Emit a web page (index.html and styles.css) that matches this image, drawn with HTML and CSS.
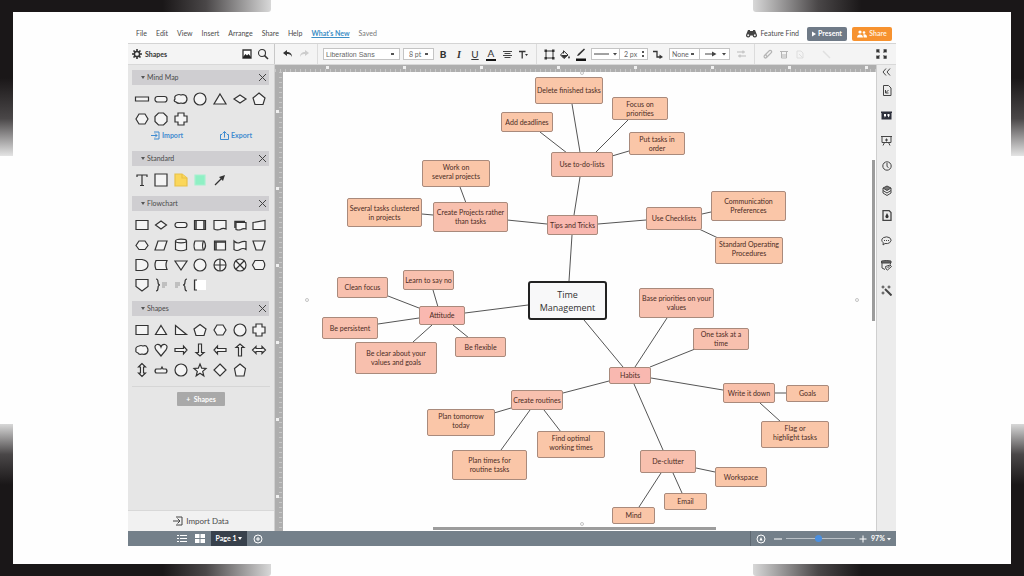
FILE: index.html
```html
<!DOCTYPE html>
<html lang="en">
<head>
<meta charset="utf-8">
<title>Time Management</title>
<link rel="stylesheet" href="styles.css">
</head>
<body>
<div class="edge edge-h edge-top edge-left"></div>
<div class="edge edge-v edge-top edge-left"></div>
<div class="edge edge-h edge-top edge-right"></div>
<div class="edge edge-v edge-top edge-right"></div>
<div class="edge edge-h edge-bottom edge-left"></div>
<div class="edge edge-v edge-bottom edge-left"></div>
<div class="edge edge-h edge-bottom edge-right"></div>
<div class="edge edge-v edge-bottom edge-right"></div>

<div class="app">
  <header class="menubar">
    <nav class="menus">
      <button>File</button><button>Edit</button><button>View</button><button>Insert</button><button>Arrange</button><button>Share</button><button>Help</button>
      <a href="#new">What's New</a>
      <span class="saved">Saved</span>
    </nav>
    <div class="actions">
      <button class="find"><svg width="11" height="9" viewBox="0 0 11 9"><path d="M2 1h2v1h3V1h2l2 5a2.2 2.2 0 1 1-4.400 0.500H4.400A2.200 2.200 0 1 1 0 6z" fill="#444"/><circle cx="2.200" cy="6.300" r="1" fill="#eee"/><circle cx="8.800" cy="6.300" r="1" fill="#eee"/></svg>Feature Find</button>
      <button class="pill present"><svg width="4" height="6" viewBox="0 0 4 6"><path d="M0 0.500L4 3 0 5.500z" fill="#fff"/></svg>Present</button>
      <button class="pill share"><svg width="10" height="8" viewBox="0 0 10 8" fill="#fff"><circle cx="3" cy="2" r="1.600"/><path d="M0 7.500c0-4 6-4 6 0z"/><circle cx="7" cy="2.500" r="1.300"/><path d="M6.600 7.500H10c0-3-2-3.500-3.600-3"/></svg>Share</button>
    </div>
  </header>

  <div class="toolbar">
    <div class="shapes-head">
      <svg width="10" height="10" viewBox="0 0 10 10" fill="none" stroke="#333"><circle cx="5" cy="5" r="2.600" stroke-width="1.500"/><path d="M5 0v2M5 8v2M0 5h2M8 5h2M1.500 1.500l1.400 1.400M7.100 7.100l1.400 1.400M8.500 1.500L7.100 2.900M2.900 7.100L1.500 8.500" stroke-width="1.600"/></svg>
      <strong>Shapes</strong>
      <button class="icon push" aria-label="Images"><svg width="10" height="10" viewBox="0 0 10 10"><path d="M1 1h8v8H1z" fill="#fff" stroke="#333" stroke-width="1.300"/><path d="M1 8l2.500-3L5 6.500 6.500 5 9 8v1H1z" fill="#222"/></svg></button>
      <button class="icon" aria-label="Search"><svg width="12" height="12" viewBox="0 0 12 12" fill="none" stroke="#333"><circle cx="5" cy="5" r="3.500" stroke-width="1.100"/><path d="M7.600 7.600L11 11" stroke-width="1.500"/></svg></button>
    </div>
    <div class="tools">
      <button class="icon" aria-label="Undo"><svg width="10" height="8" viewBox="0 0 10 8"><path d="M4 0L0 3l4 3V4c2.500-.2 4 .5 5 3 0-3.500-2-5-5-5z" fill="#333"/></svg></button>
      <button class="icon" aria-label="Redo"><svg width="10" height="8" viewBox="0 0 10 8"><path d="M6 0l4 3-4 3V4c-2.500-.2-4 .5-5 3 0-3.500 2-5 5-5z" fill="#ccc"/></svg></button>
      <span class="rule"></span>
      <select class="box font" aria-label="Font"><option>Liberation Sans</option></select>
      <select class="box size" aria-label="Font size"><option>8 pt</option></select>
      <button class="icon letter bold">B</button>
      <button class="icon letter italic">I</button>
      <button class="icon letter under">U</button>
      <button class="icon letter colour">A</button>
      <button class="icon" aria-label="Align"><svg width="9" height="9" viewBox="0 0 9 9" stroke="#444" stroke-width="1"><path d="M0 1.500h9M1.500 3.500h6M0 5.500h9M1.500 7.500h6"/></svg></button>
      <button class="icon" aria-label="Text options"><svg width="9" height="9" viewBox="0 0 9 9"><path d="M0 1.500h6.500M3.200 1.500V8.500" stroke="#333" stroke-width="1.300"/><path d="M6 4h3L7.500 6z" fill="#333"/></svg></button>
      <span class="rule"></span>
      <button class="icon" aria-label="Shape style"><svg width="11" height="11" viewBox="0 0 11 11"><path d="M2 2h7v7H2z" fill="none" stroke="#333"/><path d="M0.500 0.500h2.500v2.500H0.500zM8 0.500h2.500v2.500H8zM0.500 8h2.500v2.500H0.500zM8 8h2.500v2.500H8z" fill="#333"/></svg></button>
      <button class="icon" aria-label="Fill"><svg width="10" height="9" viewBox="0 0 10 9"><path d="M3.500 0.500v3" stroke="#333"/><path d="M4 1.200L8 5 4 8.500 0.500 5z" fill="none" stroke="#333"/><path d="M1 5h7L4 8.500zM9 5.500l.9 2a.9.9 0 1 1-1.800 0z" fill="#333"/></svg></button>
      <button class="icon" aria-label="Line colour"><svg width="10" height="13" viewBox="0 0 10 13"><path d="M1 8L2 6 8 0.500 9 1.500 3 7.500z" fill="#333"/><path d="M0 10.500h10v2.500H0z" fill="#111"/></svg></button>
      <div class="joined first">
        <button class="box line" aria-label="Line style"><svg width="25" height="8" viewBox="0 0 25 8"><path d="M1 4h15" stroke="#444"/><path d="M20 3h4L22 5.500z" fill="#444"/></svg></button>
        <input class="box width" type="text" value="2 px" aria-label="Line width">
      </div>
      <button class="icon" aria-label="Connector"><svg width="10" height="9" viewBox="0 0 10 9"><path d="M0 1.500h4v5.500h3" fill="none" stroke="#333" stroke-width="1.300"/><path d="M6.500 4.500L10 7 6.500 9z" fill="#333"/></svg></button>
      <div class="joined">
        <select class="box none" aria-label="Line start"><option>None</option></select>
        <button class="box arrow" aria-label="Line end"><svg width="26" height="8" viewBox="0 0 26 8" fill="#444"><path d="M3 3.500h7V1.500L14.500 4 10 6.500v-2H3zM20 3h4L22 5.500z"/></svg></button>
      </div>
      <button class="icon" aria-label="Swap ends"><svg width="9" height="8" viewBox="0 0 9 8" fill="none" stroke="#bbb"><path d="M0 2h8M6 0.500v3M1 6h8M3 4.500v3"/></svg></button>
      <span class="rule"></span>
      <button class="icon" aria-label="Link"><svg width="10" height="10" viewBox="0 0 10 10" fill="none" stroke="#b5b5b5" stroke-width="1.200"><path d="M3 5l3.500-3.500a1.500 1.500 0 0 1 2 2L5 7a1 1 0 0 1-1.500-1.500M6 6L3.500 8.500a1.300 1.300 0 0 1-2-2L3 5"/></svg></button>
      <button class="icon" aria-label="Lock"><svg width="8" height="9" viewBox="0 0 8 9" fill="none" stroke="#b5b5b5"><path d="M0 1.500h8M1.500 2v6h5V2M3 4v3M5 4v3"/></svg></button>
      <button class="icon" aria-label="Copy style"><svg width="8" height="9" viewBox="0 0 8 9" fill="none" stroke="#dedede"><path d="M1 1h4l2 2v5H1zM3 4l4 4"/></svg></button>
      <button class="icon wand" aria-label="Format painter"><svg width="9" height="9" viewBox="0 0 9 9" stroke="#e0e0e0" stroke-width="1.500"><path d="M1 1l3 3 4 4"/></svg></button>
      <button class="icon push" aria-label="Full screen"><svg width="11" height="10" viewBox="0 0 11 10" fill="none" stroke="#333" stroke-width="1.400"><path d="M1 3.500V1h2.500M7.500 1H10v2.500M10 6.500V9H7.500M3.500 9H1V6.500M1 1l2.500 2.500M10 1L7.500 3.500M10 9L7.500 6.500M1 9l2.500-2.500"/></svg></button>
    </div>
  </div>

  <main class="work">
    <aside class="sidebar">
      <section>
        <h2><button>Mind Map</button><button class="close" aria-label="Close Mind Map"></button></h2>
        <div class="shapes">
          <svg viewBox="0 0 16 16"><path d="M1.500 6h13v4h-13z"/></svg>
          <svg viewBox="0 0 16 16"><rect x="2" y="5.500" width="12" height="5.500" rx="2.500"/></svg>
          <svg viewBox="0 0 16 16"><path d="M4 4q2-1 4 0 3-1 5 1 2 3 0 6-2 2-5 1-3 1-5-1-3-1-1-3-1-3 2-4z"/></svg>
          <svg viewBox="0 0 16 16"><circle cx="8" cy="8" r="6"/></svg>
          <svg viewBox="0 0 16 16"><path d="M8 3l6 10H2z"/></svg>
          <svg viewBox="0 0 16 16"><path d="M8 4l6 4-6 4-6-4z"/></svg>
          <svg viewBox="0 0 16 16"><path d="M8 2l6 5-2 6.500H4L2 7z"/></svg>
          <svg viewBox="0 0 16 16"><path d="M5 3h6l3 5-3 5H5L2 8z"/></svg>
          <svg viewBox="0 0 16 16"><path d="M5.500 2h5L14 5.500v5L10.500 14h-5L2 10.500v-5z"/></svg>
          <svg viewBox="0 0 16 16"><path d="M5 2h6v3h3v6h-3v3H5v-3H2V5h3z"/></svg>
        </div>
        <div class="transfer">
          <a href="#import"><svg width="9" height="9" viewBox="0 0 9 9"><path d="M3 1h5v7H3M0 4.500h6M4 2.500l2 2-2 2"/></svg>Import</a>
          <a href="#export"><svg width="9" height="9" viewBox="0 0 9 9"><path d="M2 3.500H.5v5h8v-5H7M4.500 6.500v-6M2.500 2.500l2-2 2 2"/></svg>Export</a>
        </div>
      </section>
      <section>
        <h2><button>Standard</button><button class="close" aria-label="Close Standard"></button></h2>
        <div class="shapes">
          <svg viewBox="0 0 16 16"><path d="M3 5V3h10v2M8 3v10.500M6 13.500h4" fill="none"/></svg>
          <svg viewBox="0 0 16 16"><path d="M2 2h12v12H2z"/></svg>
          <svg viewBox="0 0 16 16"><path d="M2 2h7l5 4v8H2z" class="note"/><path d="M9 2v4h5" class="note"/></svg>
          <svg viewBox="0 0 16 16"><path d="M3 3h10v10H3z" class="mint"/></svg>
          <svg viewBox="0 0 16 16"><path d="M3 13l7-7" /><path d="M13 3l-2 6-4-4z" class="solid"/></svg>
        </div>
      </section>
      <section>
        <h2><button>Flowchart</button><button class="close" aria-label="Close Flowchart"></button></h2>
        <div class="shapes">
          <svg viewBox="0 0 16 16"><path d="M2 3.500h12v9H2z"/></svg>
          <svg viewBox="0 0 16 16"><path d="M8 4l5.500 4L8 12 2.500 8z"/></svg>
          <svg viewBox="0 0 16 16"><rect x="2" y="5.500" width="12" height="5" rx="2.500"/></svg>
          <svg viewBox="0 0 16 16"><path d="M2.500 3.500h11v9h-11z"/><path d="M4 3.500v9M12 3.500v9" class="thick"/></svg>
          <svg viewBox="0 0 16 16"><path d="M2 3.500h12v8.500q-3-1.500-6 0.500-3 1-6-.5z"/></svg>
          <svg viewBox="0 0 16 16"><path d="M4 5.500h10v6.500q-2.500-1-5 .5-2 1-5 0z"/><path d="M3 11V4.500h10" class="thick" fill="none"/></svg>
          <svg viewBox="0 0 16 16"><path d="M2 5.500l12-2v9H2z"/></svg>
          <svg viewBox="0 0 16 16"><path d="M5 4h6l3 4.500-3 4H5l-3-4z"/></svg>
          <svg viewBox="0 0 16 16"><path d="M5 4h9l-3 9H2z"/></svg>
          <svg viewBox="0 0 16 16"><path d="M2.500 4v8.500q5.500 2.500 11 0V4"/><ellipse cx="8" cy="4" rx="5.500" ry="1.800"/></svg>
          <svg viewBox="0 0 16 16"><path d="M3 4h9q3 4.500 0 9H3q-2-4.500 0-9z"/><path d="M11.500 4q-2 4.500 0 9" fill="none"/></svg>
          <svg viewBox="0 0 16 16"><path d="M2.500 4h11v9h-11z"/><path d="M2 5h12M4 5v8" class="thick"/></svg>
          <svg viewBox="0 0 16 16"><path d="M2 4q3 3 6 1.500T14 4.500v8q-3-2-6 0t-6 0z"/></svg>
          <svg viewBox="0 0 16 16"><path d="M2 4h12l-3 9H5z"/></svg>
          <svg viewBox="0 0 16 16"><path d="M2 2.500h6q6 1 6 5.500t-6 5.500H2z"/></svg>
          <svg viewBox="0 0 16 16"><path d="M3 3.500h11q-2 4.500 0 9H3q-2-4.500 0-9z"/></svg>
          <svg viewBox="0 0 16 16"><path d="M2 4h12l-6 9z"/></svg>
          <svg viewBox="0 0 16 16"><circle cx="8" cy="8" r="6"/></svg>
          <svg viewBox="0 0 16 16"><circle cx="8" cy="8" r="6"/><path d="M8 2v12M2 8h12"/></svg>
          <svg viewBox="0 0 16 16"><circle cx="8" cy="8" r="6"/><path d="M4 4l8 8M12 4l-8 8"/></svg>
          <svg viewBox="0 0 16 16"><path d="M4 3.500h8q3.500 4.500 0 9H4L1.500 8z"/></svg>
          <svg viewBox="0 0 16 16"><path d="M2 2.500h12v7L8 14 2 9.500z"/></svg>
          <svg viewBox="0 0 16 16"><path d="M3 2q2 0 2 3t2 3q-2 0-2 3t-2 3" fill="none"/><path d="M9 6h5M9 8h5M9 10h3" class="faint"/></svg>
          <svg viewBox="0 0 16 16"><path d="M14 2q-2 0-2 3t-2 3q2 0 2 3t2 3" fill="none"/><path d="M2 6h5M2 8h5M2 10h3" class="faint"/></svg>
          <svg viewBox="0 0 16 16"><path d="M4 3h10v10H4z" class="paper"/><path d="M5 3H2.500v10H5" fill="none"/></svg>
        </div>
      </section>
      <section>
        <h2><button>Shapes</button><button class="close" aria-label="Close Shapes"></button></h2>
        <div class="shapes">
          <svg viewBox="0 0 16 16"><path d="M2 3.500h12v9H2z"/></svg>
          <svg viewBox="0 0 16 16"><path d="M8 3.500l5.500 9h-11z"/></svg>
          <svg viewBox="0 0 16 16"><path d="M2.500 3.500v9h11z"/></svg>
          <svg viewBox="0 0 16 16"><path d="M8 2.500l6 4.500-2 6.500H4L2 7z"/></svg>
          <svg viewBox="0 0 16 16"><path d="M5 3h6l3 5-3 5H5L2 8z"/></svg>
          <svg viewBox="0 0 16 16"><circle cx="8" cy="8" r="6"/></svg>
          <svg viewBox="0 0 16 16"><path d="M5 2h6v3h3v6h-3v3H5v-3H2V5h3z"/></svg>
          <svg viewBox="0 0 16 16"><path d="M5 4q2-1 4 0 3-1 4 1 2 3 0 6-2 2-5 1-3 1-4-1-3-1-2-3-1-3 3-4z"/></svg>
          <svg viewBox="0 0 16 16"><path d="M8 14L3 8Q0.500 3.500 4 2.500 7 2 8 5q1-3 4-2.500Q15.500 3.500 13 8z"/></svg>
          <svg viewBox="0 0 16 16"><path d="M2 6.500h8.500V4L14 8l-3.500 4V9.500H2z"/></svg>
          <svg viewBox="0 0 16 16"><path d="M6.500 2v8.500H4L8 14l4-3.500H9.500V2z"/></svg>
          <svg viewBox="0 0 16 16"><path d="M14 6.500H5.500V4L2 8l3.500 4V9.500H14z"/></svg>
          <svg viewBox="0 0 16 16"><path d="M6.500 14V5.500H4L8 2l4 3.500H9.500V14z"/></svg>
          <svg viewBox="0 0 16 16"><path d="M1.500 8L5 4.500v2h6v-2L14.500 8 11 11.500v-2H5v2z"/></svg>
          <svg viewBox="0 0 16 16"><path d="M8 1.500L4.500 5h2v6h-2L8 14.500l3.500-3.500h-2V5h2z"/></svg>
          <svg viewBox="0 0 16 16"><path d="M3 7h5l1-2 1 2h3q2 2 0 4H3q-2-2 0-4z"/></svg>
          <svg viewBox="0 0 16 16"><circle cx="8" cy="8" r="6"/></svg>
          <svg viewBox="0 0 16 16"><path d="M8 2l1.700 4.200 4.300.3-3.300 2.900 1.100 4.400L8 11.300l-3.800 2.500 1.100-4.400L2 6.500l4.300-.3z"/></svg>
          <svg viewBox="0 0 16 16"><path d="M8 2l6 6-6 6-6-6z"/></svg>
          <svg viewBox="0 0 16 16"><path d="M8 2l5.500 4.500L12 14H4L2.500 6.500z"/></svg>
        </div>
      </section>
      <div class="more"><button>+&nbsp; Shapes</button></div>
      <button class="import-data"><svg width="10" height="10" viewBox="0 0 10 10" fill="none" stroke="#444"><path d="M3 1h6v8H3M0 5h7M4.500 2.500L7 5 4.500 7.500"/></svg>Import Data</button>
    </aside>

    <div class="stage">
      <div class="ruler-h"></div>
      <div class="ruler-v"></div>
      <div class="canvas">
        <svg class="edges" width="592" height="459" viewBox="283 72 592 459">
          <path d="M572 104L580 152M540 132L567 153M628 120L595 153M629 151L612 156M580 177L574 215M460 187L466 203M422 214L433 215M507 220L547 224M598 224L646 220M702 214L711 212M699 229L718 238M572 235L569 281M528 305L465 313M388 296L419 308M433 290L438 307M378 324L419 318M413 342L432 325M469 338L453 325M584 320L623 367M667 318L635 367M695 349L650 367M609 381L563 393M651 378L723 390M634 384L663 450M511 408L494 413M530 410L501 450M544 410L561 432M775 393L786 393M760 403L781 422M696 468L715 472M661 473L639 507M673 473L682 493"/>
          <g class="handles"><circle cx="307" cy="300" r="1.500"/><circle cx="857" cy="300" r="1.500"/><circle cx="582" cy="73" r="1.500"/><circle cx="582" cy="524" r="1.500"/></g>
        </svg>
        <div class="node root" style="--x:245px;--y:209px;--w:79px;--h:39px">Time Management</div>
        <div class="node leaf" style="--x:252px;--y:5px;--w:68px;--h:27px">Delete finished tasks</div>
        <div class="node leaf" style="--x:218px;--y:40px;--w:52px;--h:20px">Add deadlines</div>
        <div class="node leaf" style="--x:329px;--y:25px;--w:56px;--h:23px">Focus on<br>priorities</div>
        <div class="node leaf" style="--x:346px;--y:60px;--w:56px;--h:23px">Put tasks in<br>order</div>
        <div class="node mid" style="--x:268px;--y:80px;--w:62px;--h:25px">Use to-do-lists</div>
        <div class="node leaf high" style="--x:139px;--y:88px;--w:68px;--h:27px">Work on<br>several projects</div>
        <div class="node leaf" style="--x:64px;--y:126px;--w:75px;--h:29px">Several tasks clustered<br>in projects</div>
        <div class="node mid" style="--x:150px;--y:130px;--w:75px;--h:30px">Create Projects rather<br>than tasks</div>
        <div class="node top" style="--x:264px;--y:143px;--w:51px;--h:20px">Tips and Tricks</div>
        <div class="node mid2" style="--x:363px;--y:135px;--w:56px;--h:23px">Use Checklists</div>
        <div class="node leaf" style="--x:428px;--y:119px;--w:75px;--h:30px">Communication<br>Preferences</div>
        <div class="node leaf high" style="--x:432px;--y:165px;--w:68px;--h:27px">Standard Operating<br>Procedures</div>
        <div class="node mid" style="--x:54px;--y:205px;--w:51px;--h:21px">Clean focus</div>
        <div class="node mid" style="--x:120px;--y:198px;--w:51px;--h:20px">Learn to say no</div>
        <div class="node top" style="--x:136px;--y:234px;--w:46px;--h:19px">Attitude</div>
        <div class="node mid" style="--x:39px;--y:245px;--w:56px;--h:22px">Be persistent</div>
        <div class="node mid" style="--x:72px;--y:270px;--w:82px;--h:32px">Be clear about your<br>values and goals</div>
        <div class="node mid" style="--x:172px;--y:265px;--w:51px;--h:20px">Be flexible</div>
        <div class="node mid" style="--x:356px;--y:216px;--w:75px;--h:30px">Base priorities on your<br>values</div>
        <div class="node mid" style="--x:410px;--y:256px;--w:56px;--h:22px">One task at a<br>time</div>
        <div class="node top" style="--x:326px;--y:295px;--w:42px;--h:17px">Habits</div>
        <div class="node mid" style="--x:228px;--y:318px;--w:52px;--h:20px">Create routines</div>
        <div class="node leaf high" style="--x:144px;--y:337px;--w:68px;--h:27px">Plan tomorrow<br>today</div>
        <div class="node leaf" style="--x:169px;--y:378px;--w:75px;--h:30px">Plan times for<br>routine tasks</div>
        <div class="node leaf high" style="--x:254px;--y:359px;--w:68px;--h:27px">Find optimal<br>working times</div>
        <div class="node mid2" style="--x:440px;--y:311px;--w:52px;--h:20px">Write it down</div>
        <div class="node leaf" style="--x:503px;--y:313px;--w:43px;--h:17px">Goals</div>
        <div class="node leaf high" style="--x:478px;--y:349px;--w:68px;--h:27px">Flag or<br>highlight tasks</div>
        <div class="node mid" style="--x:357px;--y:378px;--w:56px;--h:23px">De-clutter</div>
        <div class="node leaf" style="--x:432px;--y:395px;--w:52px;--h:20px">Workspace</div>
        <div class="node leaf" style="--x:381px;--y:421px;--w:43px;--h:17px">Email</div>
        <div class="node leaf" style="--x:329px;--y:435px;--w:43px;--h:17px">Mind</div>
        <div class="bar bar-v"></div>
        <div class="bar bar-h"></div>
      </div>
    </div>

    <aside class="rail">
      <button class="fold" aria-label="Collapse"><svg width="9" height="8" viewBox="0 0 9 8"><path d="M4 0.500L1 4l3 3.500M8 0.500L5 4l3 3.500"/></svg></button>
      <button aria-label="Document"><svg width="10" height="11" viewBox="0 0 10 11"><path d="M1.500 0.500h5l2.500 2.500v7.500h-7.500zM3.500 8l3-3M3.500 5v3h3"/></svg></button>
      <button aria-label="Notes"><svg width="11" height="9" viewBox="0 0 11 9"><path d="M0 0.500h11v1.500h-.5v6.500H.5V2H0z" fill="#2c2f3a" stroke="none"/><path d="M3 3h2v2L3.500 6.500V5H3zM6.500 3h2v2L7 6.500V5h-.5z" fill="#fff" stroke="none"/></svg></button>
      <button aria-label="Slides"><svg width="11" height="11" viewBox="0 0 11 11"><path d="M0 1.500h11M1 1.500v6h9v-6M5.500 3.500v3M4 5h3M3.500 7.500L2 10.500M7.500 7.500L9 10.500"/></svg></button>
      <button aria-label="History"><svg width="10" height="10" viewBox="0 0 10 10"><circle cx="5" cy="5" r="4.200"/><path d="M5 2v3.500l1.500 1"/></svg></button>
      <button aria-label="Layers"><svg width="10" height="11" viewBox="0 0 10 11"><path d="M5 1l4 2-4 2.500L1 3z" fill="#777"/><path d="M1 5.500L5 8l4-2.500M1 8l4 2.500L9 8M1 3v5M9 3v5"/></svg></button>
      <button aria-label="Page style"><svg width="10" height="11" viewBox="0 0 10 11"><path d="M1 0.500h6l2 2v8H1z" stroke-width="1.300"/><path d="M5 3l1.500 3a1.600 1.600 0 1 1-3 0z" fill="#333" stroke="none"/></svg></button>
      <button aria-label="Comments"><svg width="11" height="10" viewBox="0 0 11 10"><path d="M2 9l.3-2.200Q-.8 4 2.300 1.700q3.200-1.700 6.400 0 3 2.500 0 5Q6.500 8 4 7.500z"/><path d="M3 4.500h1M5 4.500h1M7 4.500h1"/></svg></button>
      <button aria-label="Database"><svg width="11" height="11" viewBox="0 0 11 11"><path d="M1 2v6l3 1.500M9.500 2v2.500"/><path d="M0.500 1q5-1 9.500 0v2H.5z" fill="#666"/><path d="M5 9l-.5-2.500L9 5l1.500 1.500L6.500 10zM6.500 7.500l2-1"/></svg></button>
      <button aria-label="Magic"><svg width="11" height="11" viewBox="0 0 11 11"><path d="M4 4l6.500 6.500" stroke-width="2"/><path d="M2 0.500v3M.5 2h3M8 .5v3M6.500 2h3M2 6.500v3M.5 8h3"/></svg></button>
    </aside>
  </main>

  <footer class="status">
    <button class="list" aria-label="Page list"><svg width="10" height="9" viewBox="0 0 10 9" stroke="#fff"><path d="M0 1.500h2M3 1.500h7M0 4.500h2M3 4.500h7M0 7.500h2M3 7.500h7"/></svg></button>
    <button aria-label="Page grid"><svg width="10" height="9" viewBox="0 0 10 9" fill="#fff"><path d="M0 0h4.500v4H0zM5.500 0H10v4H5.500zM0 5h4.500v4H0zM5.500 5H10v4H5.500z"/></svg></button>
    <button class="page">Page 1 <svg width="4" height="4" viewBox="0 0 4 4"><path d="M0 0h4L2 3z" fill="#fff"/></svg></button>
    <button aria-label="Add page"><svg width="10" height="10" viewBox="0 0 10 10" fill="none" stroke="#fff"><circle cx="5" cy="5" r="4"/><path d="M5 3v4M3 5h4"/></svg></button>
    <span class="rule push"></span>
    <button class="centre" aria-label="Centre view"><svg width="10" height="10" viewBox="0 0 10 10" fill="none" stroke="#fff"><circle cx="5" cy="5" r="4"/><path d="M5 3l1.500 3.500h-3z" fill="#fff" stroke="none"/></svg></button>
    <button class="zoom" aria-label="Zoom out"><svg width="8" height="8" viewBox="0 0 8 8" stroke="#fff"><path d="M0 4h8"/></svg></button>
    <input type="range" min="0" max="100" value="46" aria-label="Zoom">
    <button class="zoom" aria-label="Zoom in"><svg width="8" height="8" viewBox="0 0 8 8" stroke="#fff"><path d="M0.500 4h7M4 0.500v7"/></svg></button>
    <button class="percent">97% <svg width="4" height="4" viewBox="0 0 4 4"><path d="M0 1h4L2 3.500z" fill="#fff"/></svg></button>
  </footer>
</div>
</body>
</html>
```
FILE: styles.css
```css
* { box-sizing: border-box; }
body {
  margin: 0;
  min-height: 100vh;
  padding: 24px 12.5% 30px;
  display: flex;
  position: relative;
  background: #fefefe;
  font: 7px/9px Lato, "Open Sans", sans-serif;
  color: #4a4a4a;
  overflow: hidden;
}
button, select, input { font: inherit; color: inherit; margin: 0; padding: 0; border: 0; background: none; border-radius: 0; }
button { display: inline-flex; align-items: center; justify-content: center; white-space: nowrap; }
svg { display: block; flex: none; }

/* dark brush strokes in the page corners */
.edge { position: absolute; }
.edge-h { width: 271px; height: 12px; }
.edge-v { width: 13px; height: 156px; }
.edge-top { top: 0; }
.edge-bottom { bottom: 0; }
.edge-left { left: 0; }
.edge-right { right: 0; }
.edge-h.edge-left { background: linear-gradient(90deg, #1a1718 60%, #4a4748 76%, #d8d8d8); border-radius: 0 0 3px 0; }
.edge-h.edge-right { background: linear-gradient(270deg, #1a1718 60%, #4a4748 76%, #d8d8d8); border-radius: 0 0 0 3px; }
.edge-v.edge-top { background: linear-gradient(180deg, #1a1718 50%, #4a4748 76%, #e4e4e4); }
.edge-v.edge-bottom { height: 152px; background: linear-gradient(0deg, #1a1718 60%, #4a4748 80%, #d8d8d8); }

.app { flex: 1; min-width: 0; display: flex; flex-direction: column; }

.menubar { height: 20px; display: flex; align-items: center; justify-content: space-between; padding: 0 4px 0 8px; border-bottom: 1px solid #d4d4d4; }
.menus { display: flex; gap: 9px; align-items: center; }
.menus a { color: #3d8fc6; font-weight: bold; }
.saved { color: #777; }
.actions { display: flex; align-items: center; gap: 5px; }
.find { gap: 3px; margin-right: 3px; }
.pill { width: 40px; height: 14px; border-radius: 2px; color: #fff; gap: 2px; font-weight: bold; }
.present { background: #6f7a87; }
.share { background: #f7922f; color: #ffeedd; }

.toolbar { height: 21px; display: flex; background: #f4f4f4; border-bottom: 1px solid #d8d8d8; }
.shapes-head { width: 147px; display: flex; align-items: center; padding: 0 3px 0 4px; border-right: 1px solid #c8c8c8; }
.shapes-head strong { margin-left: 3px; color: #333; }
.tools { flex: 1; display: flex; align-items: center; padding: 0 7px 0 5px; }
.icon { width: 16px; height: 16px; flex: none; }
.push { margin-left: auto; }
.tools .rule { width: 1px; height: 20px; background: #dcdcdc; margin: 0 5px; }
.tools .rule:nth-of-type(2) { margin: 0 4px 0 5px; }
.box { height: 12px; background: #fff; border: 1px solid #c4c4c4; color: #666; }
select.box {
  appearance: none;
  padding: 0 2px;
  background: #fff linear-gradient(#555, #555) no-repeat right 5px center / 3px 2px;
}
.font { width: 77px; font-family: "Liberation Sans", Arial, sans-serif; }
select.size { width: 31px; margin: 0 1px 0 3px; padding: 0 2px 0 5px; }
.letter { font-size: 10px; line-height: 11px; color: #333; }
.bold { font-weight: 900; }
.italic { font-style: italic; font-family: "Liberation Serif", serif; font-weight: bold; }
.under { text-decoration: underline; }
.colour { width: 10px; height: 13px; margin: 0 3px; border-bottom: 2px solid #111; }
.joined { display: flex; margin: 0 3px; }
.joined.first { margin: 0 2px; }
.joined .box + .box { border-left-width: 0; }
.line { width: 29px; }
.width { width: 28px; padding-left: 4px; background: #fff radial-gradient(circle, #555 1px, transparent 1px) no-repeat right 2px top 1px / 4px 4px; background-repeat: repeat-y; }
.none { width: 31px; }
.arrow { width: 30px; }
.tools .wand { margin-left: 10px; }

.work { flex: 1; min-height: 0; display: flex; }
.sidebar { width: 147px; display: flex; flex-direction: column; background: #e6e6e6; padding-top: 5px; border-right: 1px solid #d0d0d0; }
.sidebar section { padding: 0 5px 6px 4px; }
.sidebar h2 { margin: 0 0 4px; height: 15px; display: flex; align-items: center; justify-content: space-between; background: #cfced1; font: inherit; padding: 0 3px 0 9px; }
.sidebar h2 button:first-child::before { content: ""; border: 2px solid transparent; border-top: 3px solid #555; border-bottom: 0; margin-right: 2px; }
.close { width: 7px; height: 7px; background: linear-gradient(45deg, transparent 44%, #444 44%, #444 56%, transparent 56%), linear-gradient(135deg, transparent 44%, #444 44%, #444 56%, transparent 56%); }
.shapes { display: grid; grid-template-columns: repeat(7, 1fr); grid-auto-rows: 20px; place-items: center; }
.shapes svg { width: 16px; height: 16px; fill: #f4f4f4; stroke: #333; stroke-width: 1.2; }
.shapes .thick { stroke-width: 1.5; }
.shapes .faint { stroke: #999; }
.shapes .solid { fill: #333; stroke: none; }
.shapes .note { fill: #fbd75b; stroke: #e8c14a; }
.shapes .mint { fill: #8ff0c4; stroke: #a8f0d0; }
.shapes .paper { fill: #fff; stroke: none; }
.transfer { display: flex; justify-content: space-between; padding: 2px 17px 5px 19px; }
.transfer a { display: flex; gap: 2px; align-items: center; color: #3f8bd0; text-decoration: none; font-weight: bold; }
.transfer svg { fill: none; stroke: #3f8bd0; }
.more { border-top: 1px solid #d6d6d6; margin: 0 4px; padding-top: 5px; text-align: center; }
.more button { width: 48px; height: 14px; border-radius: 1px; background: #a9a9a9; color: #fff; font-weight: bold; }
.import-data { margin-top: auto; height: 21px; background: #f1f1f1; border-top: 1px solid #d8d8d8; gap: 3px; font-size: 8px; }

.stage { flex: 1; min-width: 0; display: grid; grid-template: 7px 1fr / 8px 1fr; background: #aeaeae; }
.ruler-h { grid-column: 1 / 3; background:
  repeating-linear-gradient(90deg, #f0f0f0 0 3px, transparent 3px 77px) 51px 1px / 100% 3px no-repeat,
  repeating-linear-gradient(90deg, #c8c8c8 0 1px, transparent 1px 5px) 0 4px / 100% 3px no-repeat; }
.ruler-v { background:
  repeating-linear-gradient(180deg, #f0f0f0 0 3px, transparent 3px 77px) 1px 38px / 3px 100% no-repeat,
  repeating-linear-gradient(180deg, #c8c8c8 0 1px, transparent 1px 5px) 4px 0 / 3px 100% no-repeat; }
.canvas { position: relative; overflow: hidden; background: #fefefe; }
.edges { position: absolute; left: 0; top: 0; stroke: #555; stroke-width: 1; }
.handles { fill: #fff; stroke: #c4c4c4; }
.node {
  position: absolute;
  left: var(--x); top: var(--y); width: var(--w); height: var(--h);
  display: flex; align-items: center; justify-content: center; text-align: center;
  border: 1px solid #a98a7c; border-radius: 2px;
  color: #4b2b24;
  white-space: nowrap;
}
.leaf { background: #fac6a8; }
.mid { background: #f8c0ae; }
.mid2 { background: #f9c1ab; }
.top { background: #f9b8b0; }
.high { padding-bottom: 4px; }
.root { border: 2px solid #222; border-radius: 3px; background: #f8f8f9; color: #333; font: 9px/13px "Open Sans", sans-serif; white-space: normal; }
.bar { position: absolute; background: #9c9c9c; }
.bar-v { right: 1px; top: 88px; width: 3px; height: 161px; }
.bar-h { left: 150px; bottom: 1px; height: 3px; width: 283px; }

.rail { width: 20px; display: flex; flex-direction: column; background: #ececec; border-left: 1px solid #cfcfcf; }
.rail button { height: 25px; }
.rail .fold { height: 13px; }
.rail svg { fill: none; stroke: #444; }

.status { height: 15px; display: flex; align-items: center; background: #74808a; color: #fff; font-weight: bold; padding: 0 4px 0 45px; }
.status button { width: 18px; height: 15px; }
.status .page { width: 36px; background: #38414c; margin: 0 2px; gap: 2px; }
.status .rule { width: 1px; height: 15px; background: #5d6770; }
.status .centre { width: 20px; }
.status .zoom { width: 14px; }
.status .percent { width: 22px; gap: 2px; }
.status input { appearance: none; width: 69px; height: 9px; margin: 0 1px; background: linear-gradient(#b9c0c6, #b9c0c6) no-repeat center / 100% 1px; }
.status input::-webkit-slider-thumb { appearance: none; width: 7px; height: 7px; border-radius: 50%; background: #4a8fe0; }
```
